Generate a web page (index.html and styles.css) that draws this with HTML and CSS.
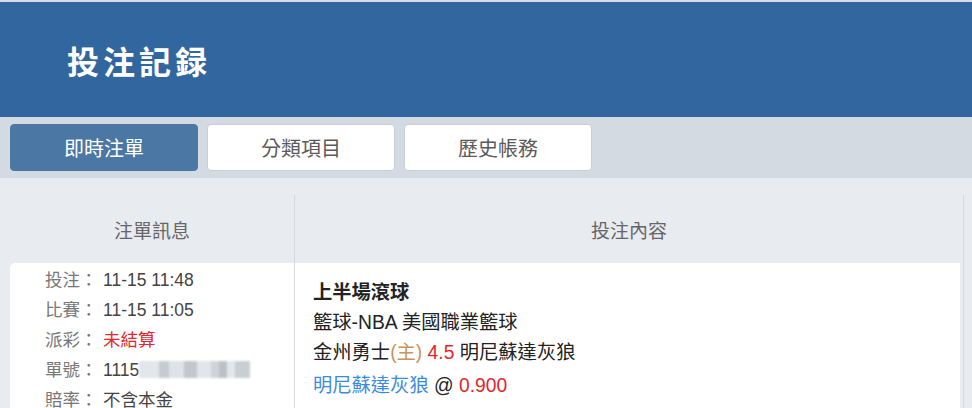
FILE: index.html
```html
<!DOCTYPE html>
<html lang="zh-Hant">
<head>
  <meta charset="UTF-8">
  <title>投注記録</title>
  <link rel="stylesheet" href="styles.css">
</head>
<body>

  <div class="header">
    <h1>投注記録</h1>
  </div>

  <div class="tabs">
    <button class="tab active">即時注單</button>
    <button class="tab">分類項目</button>
    <button class="tab">歷史帳務</button>
  </div>

  <div class="content">
    <div class="table">
      <div class="th left">注單訊息</div>
      <div class="th">投注內容</div>

      <div class="td info">
        <div class="line"><span class="label">投注：</span><span class="value">11-15 11:48</span></div>
        <div class="line"><span class="label">比賽：</span><span class="value">11-15 11:05</span></div>
        <div class="line"><span class="label">派彩：</span><span class="value red">未結算</span></div>
        <div class="line"><span class="label">單號：</span><span class="value">1115</span><span class="blur"></span></div>
        <div class="line"><span class="label">賠率：</span><span class="value">不含本金</span></div>
      </div>
      <div class="td bet">
        <div class="line bold">上半場滾球</div>
        <div class="line">籃球-NBA 美國職業籃球</div>
        <div class="line">金州勇士<span class="home">(主)</span> <span class="red">4.5</span> 明尼蘇達灰狼</div>
        <div class="line pick"><span class="blue">明尼蘇達灰狼</span> @ <span class="red">0.900</span></div>
      </div>
    </div>
  </div>

</body>
</html>
```

FILE: styles.css
```css
body {
  margin: 0;
  font-family: "Liberation Sans", "Noto Sans CJK TC", sans-serif;
  background: #e8ebf0;
  height: 408px;
  overflow: hidden;
}
.header {
  background: #31669e;
  border-top: 2px solid #d8dde3;
  height: 115px;
  display: flex;
  align-items: center;
  padding-left: 67px;
}
.header h1 {
  margin: 0;
  color: #fff;
  font-family: "Noto Sans CJK TC", serif;
  font-size: 32px;
  font-weight: bold;
  letter-spacing: 4px;
}
.tabs {
  background: #d4dae2;
  display: flex;
  gap: 9px;
  padding: 7px 10px;
}
.tab {
  width: 188px;
  height: 47px;
  background: #fff;
  border: 1px solid #c9ced6;
  border-radius: 4px;
  color: #5a5a5a;
  font-family: "Liberation Sans", "Noto Sans CJK TC", sans-serif;
  font-size: 20px;
  padding: 0;
}
.tab.active {
  background: #4a77a3;
  border-color: #4a77a3;
  color: #fff;
}
.content {
  padding: 17px 8px 0 10px;
}
.table {
  display: grid;
  grid-template-columns: 285px 1fr;
  grid-template-rows: 68px 1fr;
  border-right: 1px solid #d6d9de;
  height: 300px;
}
.th {
  display: flex;
  align-items: center;
  justify-content: center;
  color: #666;
  font-size: 19px;
}
.th.left {
  border-right: 1px solid #d6d9de;
}
.td {
  background: #fff;
}
.info {
  border-right: 1px solid #d6d9de;
  border-top-left-radius: 5px;
  padding: 2px 0 0 35px;
  font-size: 17.5px;
  line-height: 30px;
}
.label {
  display: inline-block;
  width: 58px;
  color: #777;
}
.value {
  color: #444;
}
.blur {
  display: inline-block;
  vertical-align: middle;
  width: 111px;
  height: 17px;
  margin-top: -3px;
  background: linear-gradient(90deg, #e3e6ea 0, #e3e6ea 20px, #c6cbd1 20px, #c6cbd1 30px, #dfe2e6 30px, #dfe2e6 45px, #c2c7cd 45px, #c2c7cd 58px, #e2e5e9 58px, #e2e5e9 72px, #d0d4d9 72px, #d0d4d9 80px, #bcc1c7 80px, #bcc1c7 88px, #e4e7ea 88px, #e4e7ea 96px, #c9ced3 96px);
  filter: blur(1px);
}
.bet {
  margin-right: 3px;
  padding: 15px 0 0 18px;
  font-size: 19.3px;
  line-height: 30px;
  color: #222;
}
.bold {
  font-weight: bold;
}
.pick {
  margin-top: 3px;
}
.red {
  color: #e5262a;
}
.home {
  color: #c8955a;
}
.blue {
  color: #3b8ae0;
}
```
